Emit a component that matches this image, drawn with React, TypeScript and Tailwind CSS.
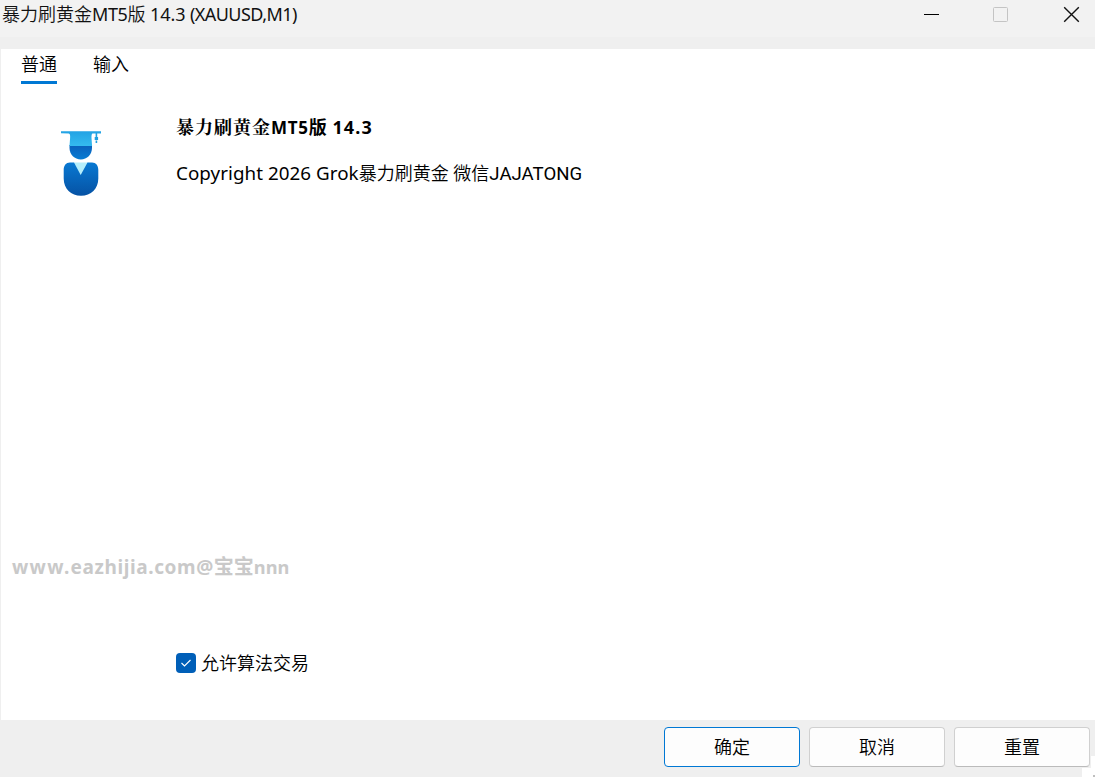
import type { ReactNode } from "react";

const tabs = [
  { label: "普通", active: true },
  { label: "输入", active: false },
];

function TitleBar() {
  return (
    <header className="flex h-[37px] shrink-0 items-start justify-between bg-[#f2f2f2]">
      <h1 className="ml-[2px] mt-[2px] whitespace-pre text-[18px] leading-6 text-[#111]">
        <span className="font-[350]">暴力刷黄金</span>
        <span className="tracking-[-0.4px]">MT5</span>
        <span className="font-[350]">版</span>
        <span className="tracking-[-0.1px]"> 14.3 </span>
        <span className="tracking-[-0.55px]">(XAUUSD,M1)</span>
      </h1>
      <div className="mr-[15px] mt-[6px] flex h-[17px] items-center">
        <button aria-label="Minimize" className="flex h-[17px] items-center">
          <svg width="17" height="17" viewBox="0 0 17 17" fill="none">
            <path d="M1 8.5h15" stroke="#000" />
          </svg>
        </button>
        <button aria-label="Maximize" className="ml-[52px]" disabled>
          <svg width="17" height="17" viewBox="0 0 17 17" fill="none">
            <rect x="1.5" y="1.5" width="14" height="14" rx="1" stroke="#c4c4c4" />
          </svg>
        </button>
        <button aria-label="Close" className="ml-[54px]">
          <svg width="17" height="17" viewBox="0 0 17 17" fill="none">
            <path d="M1.2 1.2l14.6 14.6M15.8 1.2L1.2 15.8" stroke="#111" strokeWidth="1.4" />
          </svg>
        </button>
      </div>
    </header>
  );
}

function GraduateIcon() {
  return (
    <svg width="42" height="66" viewBox="0 0 42 66" fill="none" aria-hidden="true">
      <defs>
        <linearGradient id="cap" x1="0" y1="1" x2="0" y2="17" gradientUnits="userSpaceOnUse">
          <stop stopColor="#22a2e4" />
          <stop offset="1" stopColor="#36bdf0" />
        </linearGradient>
        <linearGradient id="face" x1="0" y1="16" x2="0" y2="29" gradientUnits="userSpaceOnUse">
          <stop stopColor="#0a62bd" />
          <stop offset="1" stopColor="#087bd2" />
        </linearGradient>
        <linearGradient id="body" x1="0" y1="32" x2="0" y2="65" gradientUnits="userSpaceOnUse">
          <stop stopColor="#0879d3" />
          <stop offset="1" stopColor="#0653a5" />
        </linearGradient>
      </defs>
      <path d="M9.500 15h22.500v3c0 6.500-5 11.500-11.200 11.500S9.500 24.500 9.500 18z" fill="url(#face)" />
      <path d="M1 1.300h40v2.200h-8.300c-1 0-1.300 1.500-1.200 4.500l.6 8H9.500l.6-8c.2-2.700 0-4.300-1.400-4.500L1 3.200z" fill="url(#cap)" />
      <path d="M35.600 3h1.600v4.500h-1.600zM34.700 7h3.400v3h-3.400zM35.600 10.500h1.600v2.500h-1.600z" fill="#20a0e0" />
      <path d="M13.500 32.500h15l-7.500 14z" fill="#b5eefb" />
      <path d="M10 32.500h4L20.700 45l6.800-12.500H32c4 0 6.300 3 6.300 7.500v8.500C38.300 59 31 65.700 21 65.700S3.700 59 3.700 48.500V40c0-4.500 2.300-7.500 6.300-7.500z" fill="url(#body)" />
    </svg>
  );
}

function DialogButton({ children, primary }: { children: ReactNode; primary?: boolean }) {
  return (
    <button
      className={
        primary
          ? "h-10 w-[136px] rounded-[4px] border border-[#0078d4] bg-[#fdfdfd] text-[18px] font-[350] leading-6 text-black"
          : "h-10 w-[136px] rounded-[4px] border border-[#d0d0d0] border-b-[#bbb] bg-[#fdfdfd] text-[18px] font-[350] leading-6 text-black"
      }
    >
      {children}
    </button>
  );
}

export default function App() {
  return (
    <div className="relative flex h-[777px] w-[1095px] flex-col overflow-hidden bg-[#efefef] font-['Noto_Sans','Noto_Sans_CJK_SC',sans-serif] text-black">
      <TitleBar />

      <main className="ml-px mt-3 flex h-[671px] shrink-0 flex-col bg-white">
        {/* Tabs */}
        <nav className="ml-5 flex gap-9 pt-[3px]">
          {tabs.map((tab) => (
            <button
              key={tab.label}
              className={
                tab.active
                  ? "h-8 border-b-[3px] border-[#0078d4] pb-[5px] text-[18px] font-[350] leading-6"
                  : "h-8 border-b-[3px] border-transparent pb-[5px] text-[18px] font-[350] leading-6"
              }
            >
              {tab.label}
            </button>
          ))}
        </nav>

        {/* About */}
        <section className="ml-[59px] mt-[30px] flex">
          <div className="mt-4 w-[116px]">
            <GraduateIcon />
          </div>
          <div className="whitespace-pre">
            <h2 className="text-[17px] font-bold leading-6">
              <span className="font-['Noto_Serif_CJK_SC','Noto_Sans_CJK_SC',serif] text-[18px] tracking-[1px]">暴力刷黄金</span>
              <span className="tracking-[0.7px]">MT5</span>
              <span className="text-[18px]">版</span>
              <span className="text-[18px] tracking-[1.1px]"> 14.3</span>
            </h2>
            <p className="mt-[21px] text-[18px] leading-6">
              <span className="text-[18.8px] tracking-[0.05px]">Copyright 2026 Grok</span>
              <span className="font-[350]">暴力刷黄金 微信</span>
              <span className="font-['Roboto','Noto_Sans',sans-serif] text-[18.6px]">JAJATONG</span>
            </p>
          </div>
        </section>

        <p className="ml-[11px] mt-auto whitespace-pre text-[20px] font-bold leading-7 text-[#c9c9c9]">
          <span className="text-[19px] tracking-[1.3px]">www.</span>
          <span className="text-[19px] tracking-[0.6px]">eazhijia.com@</span>
          <span>宝宝</span>
          <span className="text-[18.2px]">nnn</span>
        </p>

        <label className="mb-[45px] ml-[175px] mt-[70px] flex h-6 items-center gap-[5px] text-[18px] font-[350] leading-6">
          <span className="flex size-5 items-center justify-center rounded-[4px] bg-[#005fb8]">
            <svg width="12" height="12" viewBox="0 0 12 12" fill="none">
              <path d="M1.500 6l3 3 6-6" stroke="#fff" strokeWidth="1.1" />
            </svg>
          </span>
          允许算法交易
        </label>
      </main>

      <footer className="mt-[7px] flex justify-end gap-[9px] pr-[5px]">
        <DialogButton primary>确定</DialogButton>
        <DialogButton>取消</DialogButton>
        <DialogButton>重置</DialogButton>
      </footer>

      {/* Resize grip */}
      <div className="absolute bottom-0 right-0 h-[9px] w-[13px] bg-white" />
      <div className="absolute bottom-[9px] right-0 h-3 w-1 bg-white" />
      <div className="absolute bottom-0 right-0 size-[2px] bg-[#bfbfbf]" />
    </div>
  );
}
